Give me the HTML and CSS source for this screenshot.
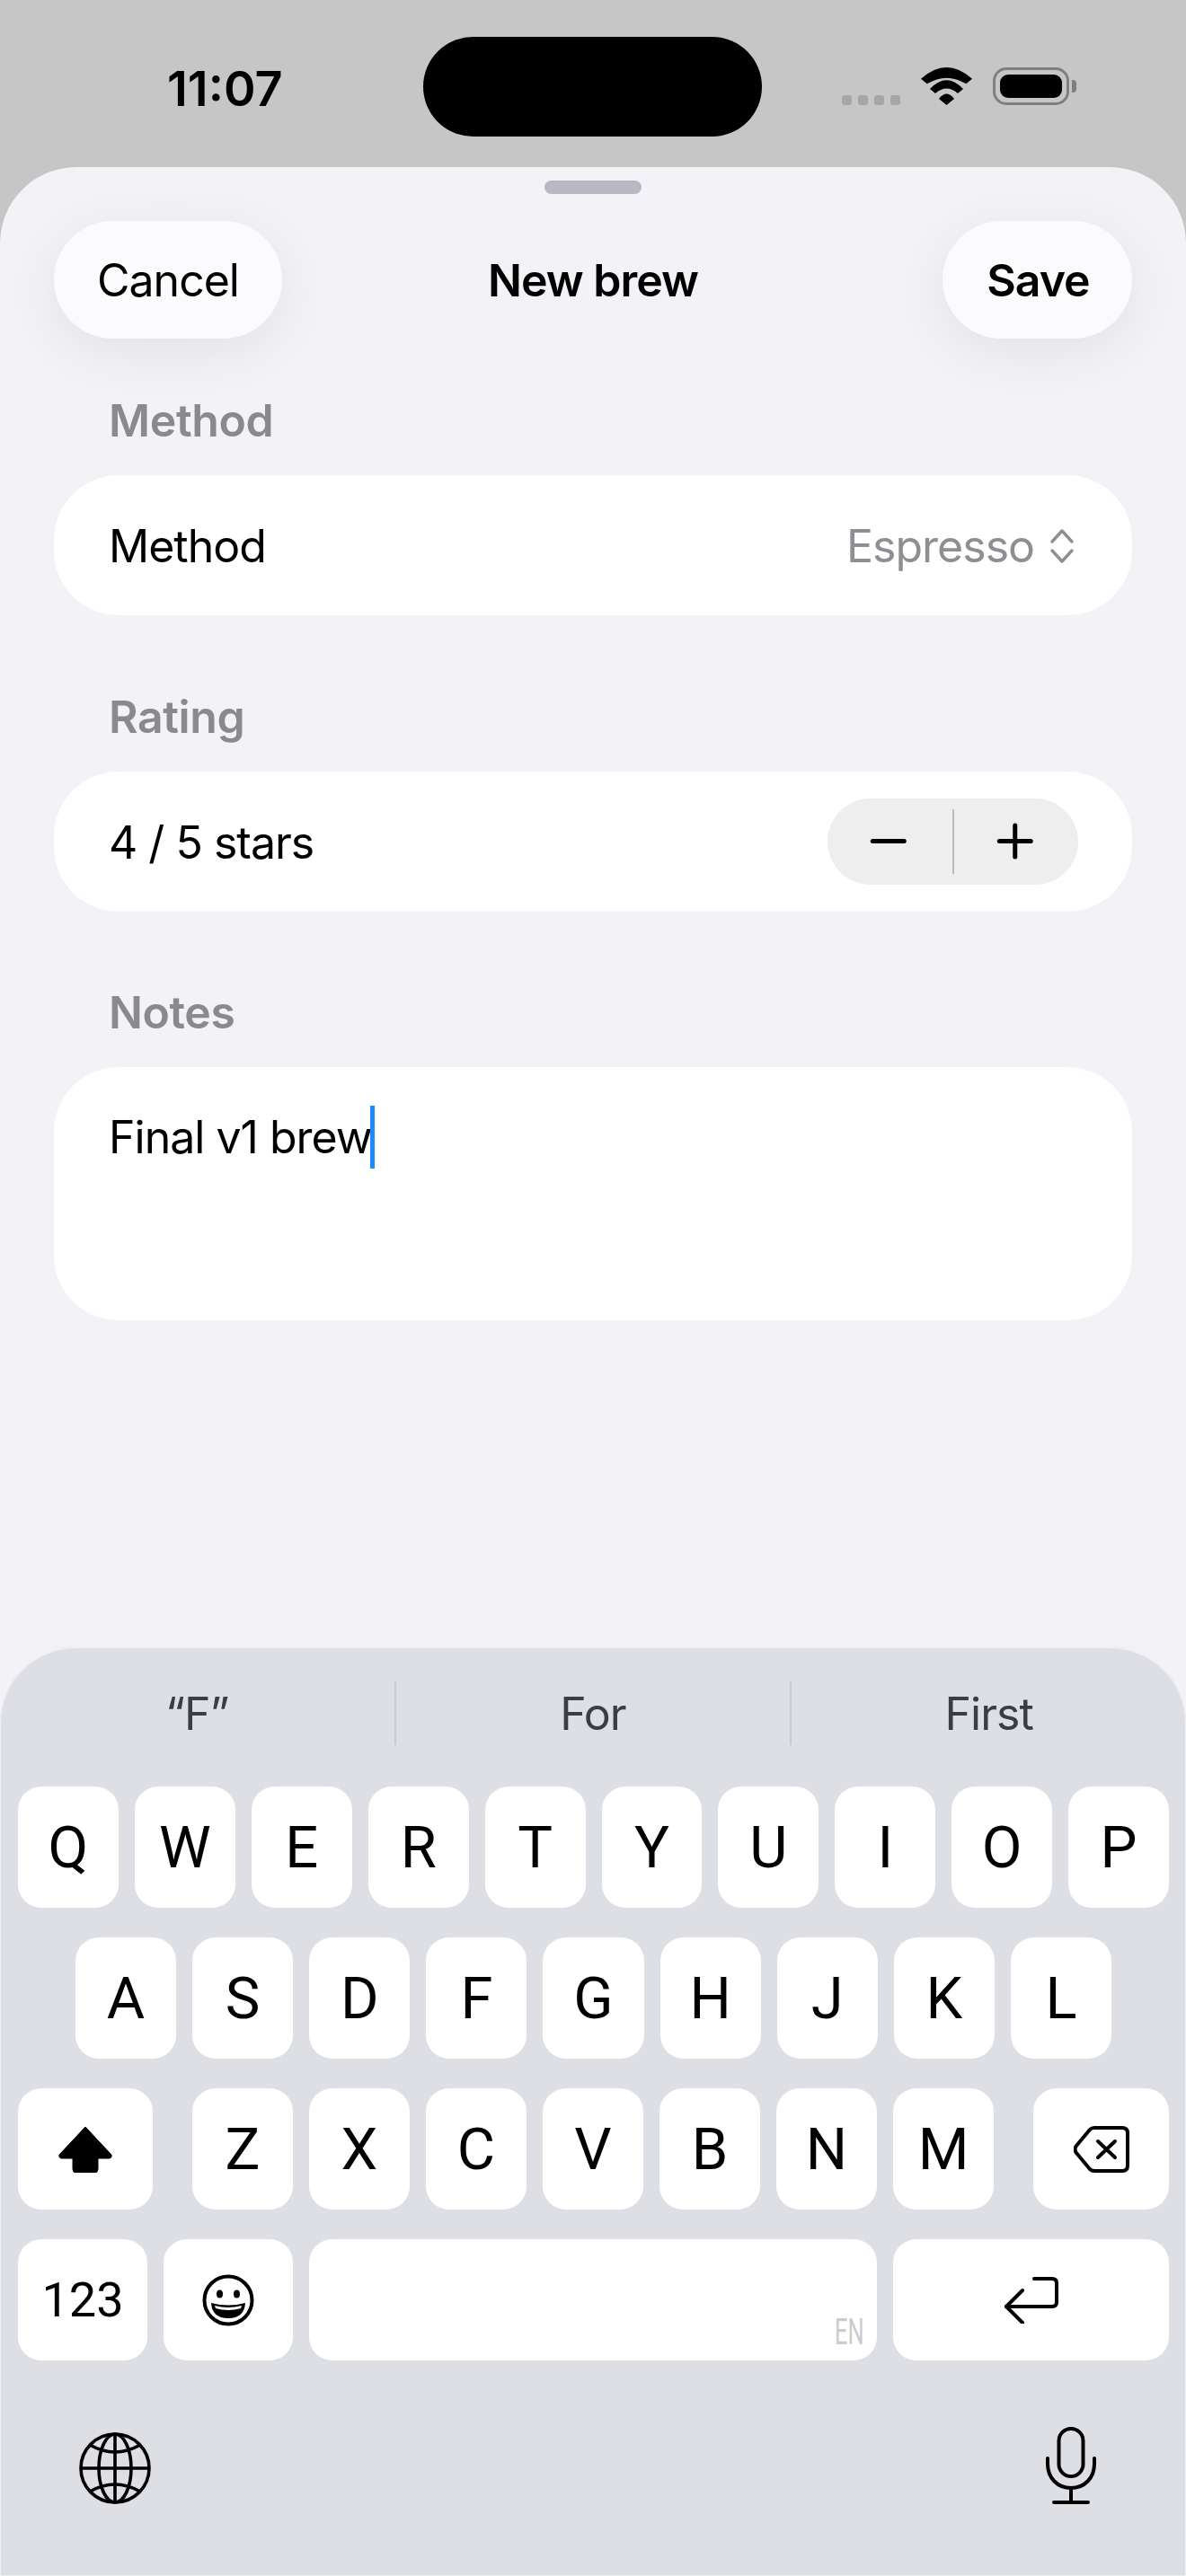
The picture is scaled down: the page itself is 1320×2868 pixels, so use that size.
FILE: index.html
```html
<!DOCTYPE html>
<html lang="en">
  <head>
    <meta charset="UTF-8" />
    <meta name="viewport" content="width=device-width, initial-scale=1.0" />
    <title>New brew</title>
    <link rel="stylesheet" href="styles.css">
  </head>
  <body>
    <!-- Status bar -->
    <header class="status-bar">
      <span class="clock">11:07</span>
      <div class="island"></div>
      <div class="status-icons">
        <div class="signal"><i></i><i></i><i></i><i></i></div>
        <svg class="wifi" width="57" height="42" viewBox="0 0 57 42">
          <path d="M0 12.7Q28.5-12.7 57 12.7L50.3 18.3Q28.5 5 6.7 18.3Z" />
          <path d="M10 24Q28.5 4.5 47 24L41 29Q28.5 18 16 29Z" />
          <path d="M20 35Q28.5 24 37 35L28.5 42Z" />
        </svg>
        <div class="battery"><div class="battery-fill"></div></div>
        <div class="battery-cap"></div>
      </div>
    </header>

    <!-- Sheet -->
    <main class="sheet">
      <div class="handle"></div>
      <div class="nav">
        <button class="nav-btn nav-btn-cancel">Cancel</button>
        <h1 class="nav-title">New brew</h1>
        <button class="nav-btn nav-btn-save">Save</button>
      </div>

      <section class="group">
        <div class="group-label">Method</div>
        <div class="card">
          <span>Method</span>
          <span class="picker">
            Espresso
            <svg width="28" height="40" viewBox="0 0 28 40" fill="none" stroke="#8e8e93" stroke-width="3.4" stroke-linecap="round" stroke-linejoin="round">
              <path d="M3 15L14 3L25 15" />
              <path d="M3 25L14 37L25 25" />
            </svg>
          </span>
        </div>
      </section>

      <section class="group">
        <div class="group-label">Rating</div>
        <div class="card">
          <span>4 / 5 stars</span>
          <div class="stepper">
            <svg class="stepper-half" width="41" height="41" viewBox="0 0 41 41" stroke="#000" stroke-width="5" stroke-linecap="round">
              <path d="M3 20.5H38" />
            </svg>
            <div class="stepper-line"></div>
            <svg class="stepper-half" width="41" height="41" viewBox="0 0 41 41" stroke="#000" stroke-width="5" stroke-linecap="round">
              <path d="M3 20.5H38M20.5 3V38" />
            </svg>
          </div>
        </div>
      </section>

      <section class="group">
        <div class="group-label">Notes</div>
        <div class="notes">Final v1 brew<span class="caret"></span></div>
      </section>
    </main>

    <!-- Keyboard -->
    <footer class="keyboard">
      <div class="suggestions">
        <div class="suggestion">“F”</div>
        <div class="suggestion suggestion-mid">For</div>
        <div class="suggestion">First</div>
      </div>
      <div class="key-row">
        <div class="key">Q</div><div class="key">W</div><div class="key">E</div><div class="key">R</div><div class="key">T</div>
        <div class="key">Y</div><div class="key">U</div><div class="key">I</div><div class="key">O</div><div class="key">P</div>
      </div>
      <div class="key-row key-row-home">
        <div class="key">A</div><div class="key">S</div><div class="key">D</div><div class="key">F</div><div class="key">G</div>
        <div class="key">H</div><div class="key">J</div><div class="key">K</div><div class="key">L</div>
      </div>
      <div class="key-row">
        <div class="key key-shift">
          <svg width="60" height="52" viewBox="0 0 60 52">
            <path d="M30 1L59 32Q60 35 57 36H44V48Q44 52 40 52H20Q16 52 16 48V36H3Q0 35 1 32Z" fill="#000" stroke="#000" stroke-linejoin="round" />
          </svg>
        </div>
        <div class="key-letters">
          <div class="key">Z</div><div class="key">X</div><div class="key">C</div><div class="key">V</div>
          <div class="key">B</div><div class="key">N</div><div class="key">M</div>
        </div>
        <div class="key key-delete">
          <svg width="62" height="52" viewBox="0 0 62 52" fill="none" stroke="#000" stroke-width="4" stroke-linecap="round" stroke-linejoin="round">
            <path d="M23 2H54Q60 2 60 8V44Q60 50 54 50H23Q20 50 18 48L3 30Q0 26 3 22L18 4Q20 2 23 2Z" />
            <path d="M27 17L46 35M46 17L27 35" />
          </svg>
        </div>
      </div>
      <div class="key-row">
        <div class="key key-num">123</div>
        <div class="key key-emoji">
          <svg width="58" height="58" viewBox="0 0 58 58">
            <circle cx="29" cy="29" r="26.5" fill="none" stroke="#000" stroke-width="4" />
            <ellipse cx="19.5" cy="22" rx="3.5" ry="4.5" />
            <ellipse cx="38.5" cy="22" rx="3.5" ry="4.5" />
            <path d="M10 32Q29 37 48 32Q47 49 29 49Q11 49 10 32Z" />
            <path d="M14 35Q29 39 44 35L43 38Q29 42 15 38Z" fill="#fff" />
          </svg>
        </div>
        <div class="key key-space"><span class="space-lang">EN</span></div>
        <div class="key key-return">
          <svg width="60" height="52" viewBox="0 0 60 52" fill="none" stroke="#000" stroke-width="4" stroke-linecap="round" stroke-linejoin="round">
            <path d="M33 2H53Q58 2 58 7V28Q58 33 53 33H2" />
            <path d="M20 15L2 33L20 51" />
          </svg>
        </div>
      </div>
      <div class="keyboard-bottom">
        <svg width="80" height="80" viewBox="0 0 80 80" fill="none" stroke="#000" stroke-width="3.6">
          <circle cx="40" cy="40" r="38" />
          <ellipse cx="40" cy="40" rx="18" ry="38" />
          <path d="M40 2V78M2 40H78" />
          <path d="M12 14Q40 30 68 14M12 66Q40 50 68 66" />
        </svg>
        <svg width="58" height="86" viewBox="0 0 58 86" fill="none" stroke="#000" stroke-width="4" stroke-linecap="round">
          <rect x="15.5" y="2" width="27" height="53" rx="13.5" />
          <path d="M3 35V41C3 57 14 68 29 68C44 68 55 57 55 41V35" />
          <path d="M29 68V84M10 84H48" />
        </svg>
      </div>
    </footer>
  </body>
</html>
```

FILE: styles.css
```css
* {
  box-sizing: border-box;
}
body {
  margin: 0;
  width: 1320px;
  height: 2868px;
  overflow: hidden;
  background: #c6c6c6;
  color: #000;
  font-family: Inter, "Noto Sans", sans-serif;
  font-size: 50px;
  letter-spacing: -1px;
  display: flex;
  flex-direction: column;
}

/* Status bar */
.status-bar {
  height: 186px;
  flex: none;
  display: flex;
  align-items: flex-start;
  padding: 41px 0 0 186px;
}
.clock {
  width: 285px;
  margin-top: 28px;
  font-size: 54px;
  font-weight: 600;
  letter-spacing: 0;
  line-height: 60px;
}
.island {
  width: 377px;
  height: 111px;
  border-radius: 56px;
  background: #000;
}
.status-icons {
  display: flex;
  align-items: flex-end;
  height: 76px;
  margin-left: 89px;
}
.signal {
  display: flex;
  gap: 7px;
  margin-right: 23px;
}
.signal i {
  width: 11px;
  height: 11px;
  border-radius: 3px;
  background: #a6a6a6;
}
.wifi {
  margin-right: 23px;
}
.battery {
  width: 85px;
  height: 42px;
  padding: 5px;
  border: 3px solid #7f7f7f;
  border-radius: 15px;
}
.battery-fill {
  height: 100%;
  border-radius: 9px;
  background: #000;
}
.battery-cap {
  width: 5px;
  height: 14px;
  margin: 0 0 14px 3px;
  border-radius: 0 4px 4px 0;
  background: #7f7f7f;
}

/* Sheet */
.sheet {
  flex: 1;
  padding: 15px 60px 0;
  background: #f2f2f7;
  border-radius: 85px 85px 0 0;
}
.handle {
  width: 108px;
  height: 15px;
  margin: 0 auto 30px;
  border-radius: 8px;
  background: #b8b8c2;
}
.nav {
  display: grid;
  grid-template-columns: 1fr auto 1fr;
  align-items: center;
  height: 131px;
}
.nav-btn {
  height: 131px;
  border: none;
  border-radius: 66px;
  background: #fbfbfe;
  box-shadow: 0 14px 60px rgba(0, 0, 0, 0.07);
  color: #000;
  font-family: inherit;
  font-size: 50px;
  letter-spacing: inherit;
}
.nav-btn-cancel {
  width: 254px;
}
.nav-btn-save {
  width: 211px;
  padding-left: 8px;
  justify-self: end;
  font-weight: 600;
}
.nav-title {
  margin: 0;
  font-size: 50px;
  font-weight: 600;
}
.group {
  margin-top: 61px;
}
.group + .group {
  margin-top: 82.5px;
}
.group-label {
  padding-left: 61px;
  margin-bottom: 31px;
  color: #8a8a8e;
  font-size: 50px;
  font-weight: 600;
  letter-spacing: -0.4px;
  line-height: 60px;
}
.card {
  height: 156px;
  padding: 0 61px;
  display: flex;
  justify-content: space-between;
  align-items: center;
  background: #fff;
  border-radius: 72px;
}
.card > span {
  padding-top: 2px;
}
.picker {
  display: flex;
  align-items: center;
  gap: 17px;
  margin-right: 3px;
  color: #8e8e93;
}
.stepper {
  width: 279px;
  height: 96px;
  margin-right: -1px;
  display: flex;
  align-items: center;
  border-radius: 48px;
  background: #eeeeee;
}
.stepper-half {
  flex: 1;
  padding-right: 3px;
}
.stepper-line {
  width: 2px;
  height: 72px;
  background: #b9b9b9;
}
.notes {
  height: 282px;
  padding: 43px 61px;
  background: #fff;
  border-radius: 72px;
  line-height: 70px;
}
.caret {
  display: inline-block;
  width: 5px;
  height: 70px;
  margin-left: -2px;
  vertical-align: top;
  background: #1a8cff;
}

/* Keyboard */
.keyboard {
  flex: none;
  height: 1035px;
  margin-top: -1035px;
  position: relative;
  padding: 0 19px 0 20px;
  background: #dedfe4;
  border-radius: 85px 85px 0 0;
  box-shadow: inset 0 2px 0 #eff0f3, inset 0 0 0 1px #eff0f3;
}
.suggestions {
  height: 156px;
  padding-top: 39px;
  margin: 0 -19px 0 -20px;
  display: flex;
  align-items: flex-start;
}
.suggestion {
  flex: 1;
  height: 71px;
  display: flex;
  justify-content: center;
  align-items: center;
  color: #3c3c43;
}
.suggestion-mid {
  border-left: 2px solid #c9cacf;
  border-right: 2px solid #c9cacf;
}
.key-row {
  display: flex;
  gap: 18px;
  height: 135px;
  margin-bottom: 33px;
}
.key-row-home {
  padding: 0 64px;
}
.key {
  flex: 1;
  display: flex;
  justify-content: center;
  align-items: center;
  background: #fff;
  border-radius: 26px;
  font-family: Roboto, sans-serif;
  font-size: 65px;
  letter-spacing: 0;
}
.key-letters {
  flex: none;
  width: 892px;
  margin: 0 26px;
  display: flex;
  gap: 18px;
}
.key-shift {
  flex: none;
  width: 150px;
}
.key-delete {
  flex: none;
  width: 151px;
}
.key-num {
  flex: none;
  width: 144px;
  font-size: 54px;
}
.key-emoji {
  flex: none;
  width: 144px;
}
.key-space {
  flex: none;
  width: 632px;
  position: relative;
}
.key-return {
  flex: none;
  width: 307px;
}
.space-lang {
  position: absolute;
  right: 14px;
  bottom: 11px;
  color: #cccccc;
  font-size: 41px;
  line-height: 41px;
  transform: scaleX(0.62);
  transform-origin: right bottom;
}
.keyboard-bottom {
  display: flex;
  justify-content: space-between;
  align-items: flex-end;
  padding: 41px 80px 0 68px;
}
```
